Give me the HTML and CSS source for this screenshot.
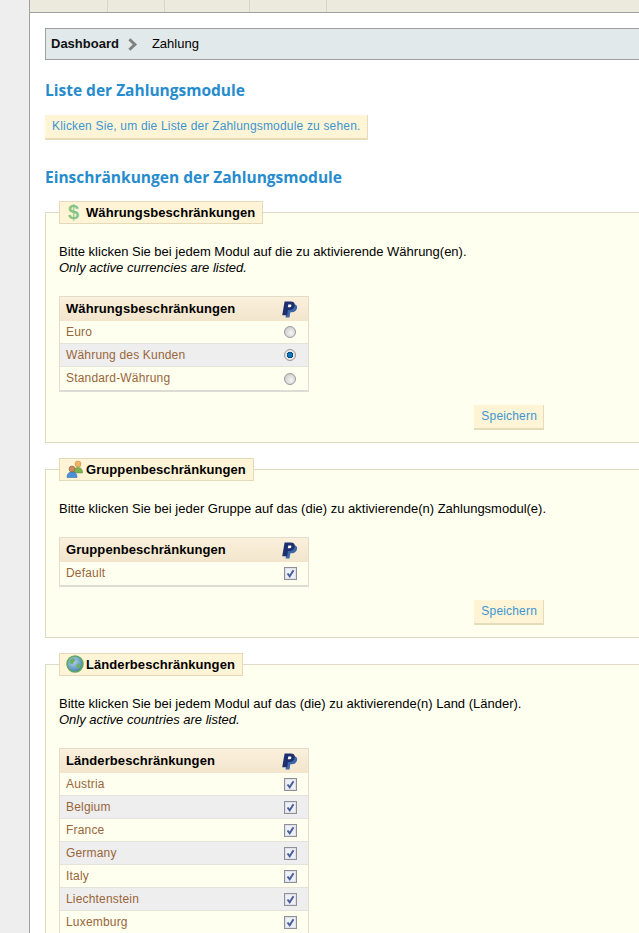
FILE: index.html
```html
<!DOCTYPE html>
<html lang="de">
<head>
<meta charset="utf-8">
<title>Zahlung</title>
<link rel="stylesheet" href="styles.css">
</head>
<body>
<svg class="defs" width="0" height="0" aria-hidden="true">
  <defs>
    <symbol id="paypal" viewBox="0 0 17 18">
      <path fill="#3f67a8" d="M6.500 3.500h6.200c2.800 0 4.300 1.500 3.800 4-.5 2.800-2.600 4.400-5.400 4.400H9.400l-.9 5.600H4.300z"/>
      <path fill="#1d2f6f" d="M3.300.5h6.500c3 0 4.700 1.500 4.200 4.200-.5 3-2.900 4.900-5.900 4.900H6.900l-.9 5.400H.8z"/>
      <path fill="#fff" d="M7.200 3.600h1.700c1.200 0 1.800.5 1.600 1.500-.2 1.100-1.100 1.600-2.300 1.600H6.700z"/>
    </symbol>
    <symbol id="tick" viewBox="0 0 13 13">
      <rect x=".5" y=".5" width="12" height="12" fill="#dfe1ea" stroke="#8e8f99"/>
      <rect x="2" y="2" width="9" height="9" fill="#eef0f5"/>
      <path fill="none" stroke="#4a5f9c" stroke-width="2" d="M3.500 6.500l2.200 2.800 3.800-6"/>
    </symbol>
    <symbol id="users" viewBox="0 0 18 18">
      <circle cx="12" cy="4" r="3" fill="#eeb562" stroke="#b98a45" stroke-width=".5"/>
      <path fill="#7fb24f" stroke="#5f8f3a" stroke-width=".5" d="M7.500 13c0-4 1.500-5.500 4.500-5.500s4.500 1.500 4.500 5.500z"/>
      <circle cx="6" cy="9" r="3" fill="#c98b58" stroke="#7d5230" stroke-width=".5"/>
      <path fill="#4a8fd8" stroke="#2f66a8" stroke-width=".5" d="M1 17.500c0-4 2-5.500 5-5.500s5 1.500 5 5.500z"/>
    </symbol>
    <radialGradient id="sea" cx=".4" cy=".35" r=".7"><stop offset="0" stop-color="#b7d6ee"/><stop offset="1" stop-color="#3f7fae"/></radialGradient>
    <symbol id="globe" viewBox="0 0 18 18">
      <circle cx="9" cy="9" r="8" fill="url(#sea)" stroke="#5fa860" stroke-width="1.500"/>
      <path fill="#6fae6a" d="M4 5c2-2 4-2 5-1s0 2-1 3-1 3-3 2-2-3-1-4zM11 9c2-1 4 0 4 1s-2 4-3 4-2-4-1-5z"/>
    </symbol>
  </defs>
</svg>
<div class="side"></div>
<div class="page">
  <div class="topbar">
    <span class="tab t1"></span><span class="tab t2"></span><span class="tab t3"></span><span class="tab t4"></span>
  </div>
  <main class="content">
    <nav class="crumb"><b>Dashboard</b><span class="chev"></span><span>Zahlung</span></nav>
    <h2 class="title first">Liste der Zahlungsmodule</h2>
    <a class="btn list">Klicken Sie, um die Liste der Zahlungsmodule zu sehen.</a>
    <h2 class="title second">Einschränkungen der Zahlungsmodule</h2>

    <fieldset class="box">
      <legend><span class="dollar">$</span>Währungsbeschränkungen</legend>
      <p class="intro">Bitte klicken Sie bei jedem Modul auf die zu aktivierende Währung(en).<br><i>Only active currencies are listed.</i></p>
      <table class="grid">
        <tr><th>Währungsbeschränkungen</th><th class="col"><svg class="pp"><use href="#paypal"/></svg></th></tr>
        <tr><td>Euro</td><td class="col"><span class="radio"></span></td></tr>
        <tr class="alt"><td>Währung des Kunden</td><td class="col"><span class="radio on"></span></td></tr>
        <tr><td>Standard-Währung</td><td class="col"><span class="radio"></span></td></tr>
      </table>
      <div class="actions"><a class="btn">Speichern</a></div>
    </fieldset>

    <fieldset class="box">
      <legend><svg class="ico"><use href="#users"/></svg>Gruppenbeschränkungen</legend>
      <p class="intro">Bitte klicken Sie bei jeder Gruppe auf das (die) zu aktivierende(n) Zahlungsmodul(e).</p>
      <table class="grid">
        <tr><th>Gruppenbeschränkungen</th><th class="col"><svg class="pp"><use href="#paypal"/></svg></th></tr>
        <tr><td>Default</td><td class="col"><svg class="chk"><use href="#tick"/></svg></td></tr>
      </table>
      <div class="actions"><a class="btn">Speichern</a></div>
    </fieldset>

    <fieldset class="box">
      <legend><svg class="ico"><use href="#globe"/></svg>Länderbeschränkungen</legend>
      <p class="intro">Bitte klicken Sie bei jedem Modul auf das (die) zu aktivierende(n) Land (Länder).<br><i>Only active countries are listed.</i></p>
      <table class="grid">
        <tr><th>Länderbeschränkungen</th><th class="col"><svg class="pp"><use href="#paypal"/></svg></th></tr>
        <tr><td>Austria</td><td class="col"><svg class="chk"><use href="#tick"/></svg></td></tr>
        <tr class="alt"><td>Belgium</td><td class="col"><svg class="chk"><use href="#tick"/></svg></td></tr>
        <tr><td>France</td><td class="col"><svg class="chk"><use href="#tick"/></svg></td></tr>
        <tr class="alt"><td>Germany</td><td class="col"><svg class="chk"><use href="#tick"/></svg></td></tr>
        <tr><td>Italy</td><td class="col"><svg class="chk"><use href="#tick"/></svg></td></tr>
        <tr class="alt"><td>Liechtenstein</td><td class="col"><svg class="chk"><use href="#tick"/></svg></td></tr>
        <tr><td>Luxemburg</td><td class="col"><svg class="chk"><use href="#tick"/></svg></td></tr>
      </table>
    </fieldset>
  </main>
</div>
</body>
</html>
```
FILE: styles.css
```css
html, body { margin: 0; height: 933px; overflow: hidden; }
body { display: flex; background: #fff; font: 13px/15px "Liberation Sans", Arial, sans-serif; color: #000; }
.defs { position: absolute; }
.side { flex: 0 0 29px; background: #eeeeee; }
.page { flex: 1; min-width: 0; border-left: 1px solid #a0a0a0; overflow: hidden; }
.topbar { display: flex; height: 12px; background: #ece9dd; border-bottom: 1px solid #a0a0a0; }
.tab { height: 12px; border-right: 1px solid #d8d6cc; box-sizing: border-box; }
.t1 { width: 78px; }
.t2 { width: 57px; }
.t3 { width: 85px; }
.t4 { width: 77px; }
.content { padding: 15px 0 0 15px; width: 900px; }
.crumb { display: flex; align-items: center; box-sizing: border-box; height: 32px; padding: 0 0 1px 5px; background: #e2e9eb; border: 1px solid #a0a0a0; font-size: 13px; }
.crumb b { font-weight: bold; color: #111; }
.chev { width: 6px; height: 6px; margin: 2px 17px 0 7px; border: solid #808080; border-width: 3px 3px 0 0; transform: rotate(45deg); }
.title { margin: 0; font: bold 15.5px/20px "Open Sans", sans-serif; color: #268ccd; }
.first { margin-top: 20px; }
.second { margin-top: 27px; }
.btn { display: inline-block; box-sizing: border-box; height: 25px; padding: 0 6px 0 7px; font-size: 12px; letter-spacing: .18px; line-height: 23px; color: #3c96d2; background: #fff4d6; border-right: 1px solid #e5dcb9; border-bottom: 2px solid #e5dcb9; }
.list { margin-top: 15px; }
.box { box-sizing: border-box; width: 800px; min-width: 0; margin: 15px 0 0; padding: 0 13px; background: #fffff0; border: 1px solid #e0d9c5; }
.box + .box { margin-top: 15px; }
.first + .btn + .second + .box { margin-top: 14px; }
legend { display: flex; align-items: center; box-sizing: border-box; height: 23px; padding: 0 7px 1px 7px; font-weight: bold; font-size: 13px; letter-spacing: .08px; background: #fff4d6; border: 1px solid #e3d9bb; }
.dollar { width: 19px; padding-left: 1px; box-sizing: border-box; font: bold 20px/20px "Liberation Sans", sans-serif; color: #85c585; }
.ico { width: 18px; height: 18px; margin: 0 2px 0 -1px; }
.intro { margin: 20px 0 0; line-height: 16px; }
.grid { box-sizing: border-box; width: 250px; margin-top: 20px; border-collapse: separate; border-spacing: 0; border: 1px solid #e3dcc8; border-bottom: 2px solid #dcdcd4; }
.grid th { box-sizing: border-box; height: 24px; padding: 0 0 1px 6px; text-align: left; font-size: 13px; letter-spacing: .08px; background: linear-gradient(#fbf0dc, #f2e5cc); }
.grid td { box-sizing: border-box; height: 23px; padding: 0 0 0 6px; font-size: 12px; letter-spacing: .18px; color: #99663a; border-bottom: 1px solid #e3e3dc; }
.grid tr:last-child td { border-bottom: 0; }
.grid .alt td { background: #eeeeee; }
.grid .col { width: 38px; padding: 0; text-align: left; }
.pp { display: block; width: 17px; height: 17px; margin-left: 11px; }
.chk { display: block; width: 13px; height: 13px; margin-left: 14px; }
.radio { display: block; box-sizing: border-box; width: 12px; height: 12px; margin-left: 14px; border-radius: 50%; border: 1px solid #999; background: radial-gradient(circle at 60% 60%, #f5f5f5, #c4c4c4); }
.radio.on { background: radial-gradient(circle, #0a78bd 0 2px, #0d3c66 3px, #e6e6e6 3.500px); }
.actions { width: 485px; margin-top: 13px; padding-bottom: 12px; text-align: right; }
```
